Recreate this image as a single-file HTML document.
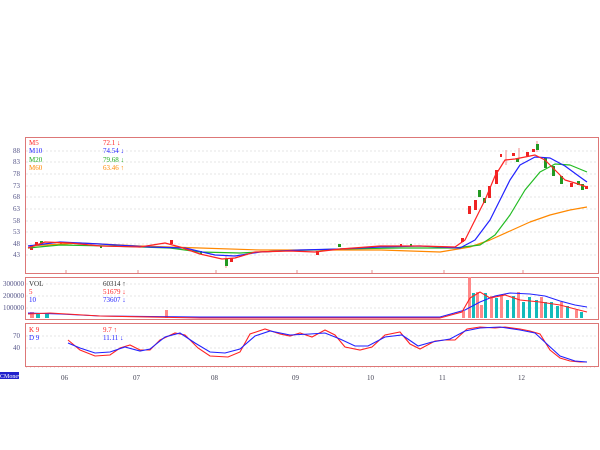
<!DOCTYPE html>
<html><head><meta charset="utf-8"><style>
body{margin:0;background:#fff;width:600px;height:450px;overflow:hidden}
svg{display:block}
text{font-family:"Liberation Serif",serif;font-size:7px}
</style></head><body>
<svg width="600" height="450" viewBox="0 0 600 450">
<g stroke="#ccc" stroke-dasharray="2,2" stroke-width="0.6">
<line x1="26" x2="598" y1="151" y2="151"/><line x1="26" x2="598" y1="162" y2="162"/><line x1="26" x2="598" y1="174" y2="174"/><line x1="26" x2="598" y1="186" y2="186"/><line x1="26" x2="598" y1="197" y2="197"/><line x1="26" x2="598" y1="209" y2="209"/><line x1="26" x2="598" y1="221" y2="221"/><line x1="26" x2="598" y1="232" y2="232"/><line x1="26" x2="598" y1="244" y2="244"/><line x1="26" x2="598" y1="255" y2="255"/>
<line x1="26" x2="598" y1="284" y2="284"/><line x1="26" x2="598" y1="296" y2="296"/><line x1="26" x2="598" y1="308" y2="308"/>
<line x1="26" x2="598" y1="336" y2="336"/><line x1="26" x2="598" y1="348" y2="348"/>
</g>
<g fill="none" stroke="#d77" stroke-width="1">
<rect x="25.5" y="137.5" width="573" height="136"/>
<rect x="25.5" y="277.5" width="573" height="42"/>
<rect x="25.5" y="323.5" width="573" height="43"/>
</g>
<g stroke="#d77" stroke-width="0.8">
<line x1="66" x2="66" y1="270" y2="273"/><line x1="138" x2="138" y1="270" y2="273"/><line x1="216" x2="216" y1="270" y2="273"/><line x1="297" x2="297" y1="270" y2="273"/><line x1="372" x2="372" y1="270" y2="273"/><line x1="444" x2="444" y1="270" y2="273"/><line x1="523" x2="523" y1="270" y2="273"/>
</g>
<g fill="#558">
<text x="13" y="153">88</text><text x="13" y="164">83</text><text x="13" y="176">78</text><text x="13" y="188">73</text><text x="13" y="199">68</text><text x="13" y="211">63</text><text x="13" y="223">58</text><text x="13" y="234">53</text><text x="13" y="246">48</text><text x="13" y="257">43</text>
<text x="3" y="286">300000</text><text x="3" y="298">200000</text><text x="3" y="310">100000</text>
<text x="13" y="338">70</text><text x="13" y="350">40</text>
</g>
<g fill="#445">
<text x="61" y="380">06</text><text x="133" y="380">07</text><text x="211" y="380">08</text><text x="292" y="380">09</text><text x="367" y="380">10</text><text x="439" y="380">11</text><text x="518" y="380">12</text>
</g>
<rect x="0" y="372" width="19" height="7" fill="#2222cc"/>
<text x="0" y="378" fill="#fff" style="font-size:6px">CMoney</text>
<text x="29" y="145" fill="#f22">M5</text><text x="103" y="145" fill="#f22">72.1 ↓</text>
<text x="29" y="153" fill="#22f">M10</text><text x="103" y="153" fill="#22f">74.54 ↓</text>
<text x="29" y="162" fill="#2a2">M20</text><text x="103" y="162" fill="#2a2">79.68 ↓</text>
<text x="29" y="170" fill="#f80">M60</text><text x="103" y="170" fill="#f80">63.46 ↑</text>
<text x="29" y="286" fill="#333">VOL</text><text x="103" y="286" fill="#333">60314 ↑</text>
<text x="29" y="294" fill="#f22">5</text><text x="103" y="294" fill="#f22">51679 ↓</text>
<text x="29" y="302" fill="#22f">10</text><text x="103" y="302" fill="#22f">73607 ↓</text>
<text x="29" y="332" fill="#f22">K 9</text><text x="103" y="332" fill="#f22">9.7 ↑</text>
<text x="29" y="340" fill="#22f">D 9</text><text x="103" y="340" fill="#22f">11.11 ↓</text>
<g stroke="#e44" stroke-width="0.6"><line x1="506" x2="506" y1="150" y2="165"/><line x1="519" x2="519" y1="148" y2="160"/><line x1="537" x2="537" y1="141" y2="152"/><line x1="226" x2="226" y1="255" y2="268"/></g>
<g fill="#e22"><rect x="30" y="245" width="3" height="5"/><rect x="35" y="242" width="3" height="4"/><rect x="60" y="243" width="2" height="2"/><rect x="170" y="240" width="3" height="4"/><rect x="230" y="258" width="3" height="4"/><rect x="316" y="251" width="3" height="4"/><rect x="400" y="244" width="2" height="2"/><rect x="461" y="238" width="3" height="4"/><rect x="468" y="206" width="3" height="8"/><rect x="474" y="200" width="3" height="10"/><rect x="488" y="186" width="3" height="12"/><rect x="495" y="170" width="3" height="14"/><rect x="500" y="154" width="2" height="3"/><rect x="512" y="153" width="3" height="3"/><rect x="526" y="152" width="3" height="4"/><rect x="532" y="149" width="3" height="3"/><rect x="570" y="183" width="3" height="4"/><rect x="585" y="186" width="3" height="3"/></g>
<g fill="#292"><rect x="40" y="241" width="3" height="3"/><rect x="100" y="246" width="2" height="2"/><rect x="200" y="251" width="2" height="3"/><rect x="225" y="259" width="3" height="7"/><rect x="338" y="244" width="3" height="3"/><rect x="410" y="244" width="2" height="2"/><rect x="478" y="190" width="3" height="7"/><rect x="483" y="198" width="3" height="5"/><rect x="516" y="158" width="3" height="4"/><rect x="536" y="144" width="3" height="6"/><rect x="544" y="158" width="3" height="10"/><rect x="552" y="166" width="3" height="10"/><rect x="560" y="176" width="3" height="8"/><rect x="577" y="181" width="3" height="4"/><rect x="581" y="184" width="3" height="6"/></g>
<g fill="none" stroke-width="1.2" stroke-linejoin="round">
<polyline stroke="#f80" points="28,246 80,243 140,246 200,248 260,250 320,250 380,250 440,252 470,247 490,240 510,231 530,222 550,215 570,210 587,207"/>
<polyline stroke="#2b2" points="28,248 60,245 110,246 170,248 200,252 240,253 280,251 340,249 400,248 455,248 480,245 495,235 510,215 525,190 540,172 555,164 570,165 587,172"/>
<polyline stroke="#22f" points="28,246 60,242 100,244 150,247 185,248 215,255 235,256 260,252 300,250 340,249 380,247 420,246 460,248 475,240 490,220 500,200 510,180 520,165 535,157 550,158 565,166 580,177 587,182"/>
<polyline stroke="#f22" points="28,248 45,242 70,243 100,246 140,247 165,243 180,247 200,254 222,259 235,258 255,252 290,251 315,252 340,249 380,246 420,246 455,247 465,240 475,220 485,200 495,176 505,160 515,159 525,157 535,155 545,160 555,170 565,180 575,183 587,187"/>
</g>
<g fill="#f88"><rect x="468" y="277" width="3" height="41"/><rect x="476" y="292" width="3" height="26"/><rect x="490" y="296" width="3" height="22"/><rect x="500" y="295" width="3" height="23"/><rect x="517" y="292" width="3" height="26"/><rect x="480" y="305" width="3" height="13"/><rect x="462" y="311" width="3" height="7"/><rect x="165" y="310" width="3" height="8"/><rect x="30" y="312" width="4" height="6"/><rect x="540" y="297" width="3" height="21"/><rect x="560" y="302" width="3" height="16"/><rect x="575" y="310" width="3" height="8"/></g>
<g fill="#1bb"><rect x="472" y="293" width="3" height="25"/><rect x="484" y="293" width="3" height="25"/><rect x="495" y="298" width="3" height="20"/><rect x="506" y="300" width="3" height="18"/><rect x="512" y="296" width="3" height="22"/><rect x="522" y="302" width="3" height="16"/><rect x="528" y="297" width="3" height="21"/><rect x="535" y="300" width="3" height="18"/><rect x="544" y="302" width="3" height="16"/><rect x="550" y="302" width="3" height="16"/><rect x="556" y="306" width="3" height="12"/><rect x="566" y="306" width="3" height="12"/><rect x="580" y="312" width="3" height="6"/><rect x="36" y="314" width="4" height="4"/><rect x="45" y="314" width="4" height="4"/></g>
<g fill="none" stroke-width="1.1">
<polyline stroke="#22f" points="28,313 60,314 100,316 200,317 440,317 465,310 480,302 495,296 510,293 530,294 545,296 560,301 575,305 587,307"/>
<polyline stroke="#f22" points="28,314 50,313 100,316 200,318 440,318 462,312 470,298 480,292 490,298 505,295 520,300 540,302 560,305 575,309 587,312"/>
</g>
<g fill="none" stroke-width="1.1">
<polyline stroke="#f22" points="68,340 80,350 95,356 110,355 120,348 130,345 140,350 150,350 160,340 175,333 185,335 198,348 210,356 228,357 240,352 250,334 265,329 280,334 290,336 300,333 312,337 325,330 335,335 345,347 360,350 372,347 385,335 400,332 410,344 420,349 435,341 445,340 455,340 467,329 480,327 495,328 505,327 520,329 530,331 540,334 550,350 560,358 570,361 580,362 587,362"/>
<polyline stroke="#22f" points="68,343 80,348 95,353 110,352 125,347 140,351 150,349 165,337 180,333 195,343 210,352 225,353 240,349 255,336 270,331 290,335 310,334 325,333 340,339 355,346 368,346 385,337 402,335 418,346 432,342 450,339 465,331 480,328 500,327 520,330 535,333 548,345 560,356 575,361 587,362"/>
</g>
<g stroke="#d77" stroke-width="0.6" stroke-dasharray="1,3"><line x1="26" x2="598" y1="367" y2="367"/></g>
</svg>
</body></html>
